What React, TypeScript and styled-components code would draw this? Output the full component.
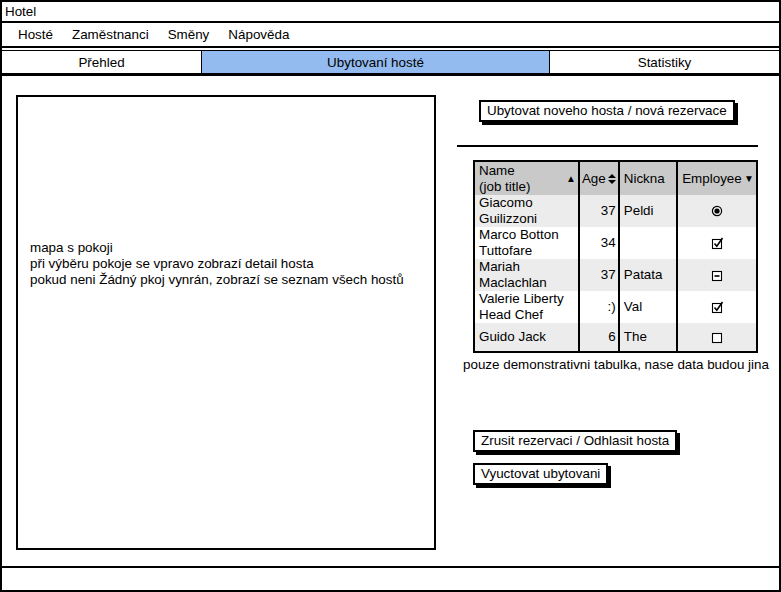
import styled, { createGlobalStyle } from "styled-components";

const GlobalStyle = createGlobalStyle`
  html, body {
    margin: 0;
    padding: 0;
    background: #fff;
  }
  body {
    font-family: "Liberation Sans", Arial, sans-serif;
    font-size: 13.4px;
    color: #000;
  }
`;

type Guest = {
  name: string[];
  age: string;
  nick: string;
  employee: "radio" | "checked" | "mixed" | "empty";
};

const guests: Guest[] = [
  { name: ["Giacomo", "Guilizzoni"], age: "37", nick: "Peldi", employee: "radio" },
  { name: ["Marco Botton", "Tuttofare"], age: "34", nick: "", employee: "checked" },
  { name: ["Mariah", "Maclachlan"], age: "37", nick: "Patata", employee: "mixed" },
  { name: ["Valerie Liberty", "Head Chef"], age: ":)", nick: "Val", employee: "checked" },
  { name: ["Guido Jack"], age: "6", nick: "The", employee: "empty" },
];

const menuItems = ["Hosté", "Zaměstnanci", "Směny", "Nápověda"];

const tabs = [
  { label: "Přehled", width: 200, active: false },
  { label: "Ubytovaní hosté", width: 348, active: true },
  { label: "Statistiky", width: 0, active: false },
];

const EmployeeIcon = ({ kind }: { kind: Guest["employee"] }) => {
  if (kind === "radio") {
    return (
      <svg width="12" height="12" viewBox="0 0 12 12">
        <circle cx="6" cy="6" r="4.6" fill="none" stroke="#000" strokeWidth="1.2" />
        <circle cx="6" cy="6" r="2.6" fill="#000" />
      </svg>
    );
  }
  return (
    <svg width="13" height="13" viewBox="0 0 13 13">
      <rect x="1.5" y="2.5" width="9" height="9" fill="#fff" stroke="#000" strokeWidth="1.1" />
      {kind === "checked" && (
        <path d="M3.5 6.5 L5.8 9.2 L11.5 1" fill="none" stroke="#000" strokeWidth="1.6" />
      )}
      {kind === "mixed" && <rect x="3.5" y="6.2" width="5" height="1.6" fill="#000" />}
    </svg>
  );
};

const App = () => {
  return (
    <>
      <GlobalStyle />
      <Window>
        <TitleBar>Hotel</TitleBar>
        <MenuBar>
          {menuItems.map((m) => (
            <MenuItem key={m}>{m}</MenuItem>
          ))}
        </MenuBar>
        <TabBar>
          {tabs.map((t) => (
            <Tab key={t.label} $width={t.width} $active={t.active}>
              {t.label}
            </Tab>
          ))}
        </TabBar>
        <Content>
          <MapBox>
            <p>mapa s pokoji</p>
            <p>při výběru pokoje se vpravo zobrazí detail hosta</p>
            <p>pokud neni Žádný pkoj vynrán, zobrazí se seznam všech hostů</p>
          </MapBox>
          <RightColumn>
            <Button $top={24} $left={22}>
              Ubytovat noveho hosta / nová rezervace
            </Button>
            <Divider />
            <Grid>
              <thead>
                <tr>
                  <th className="name">
                    <HeadCell>
                      <span>
                        Name
                        <br />
                        (job title)
                      </span>
                      <SortArrow>▲</SortArrow>
                    </HeadCell>
                  </th>
                  <th className="age">
                    <HeadCell>
                      <span>Age</span>
                      <svg width="8" height="10" viewBox="0 0 8 10">
                        <path d="M0 4 L4 0 L8 4 Z M0 6 L4 10 L8 6 Z" fill="#000" />
                      </svg>
                    </HeadCell>
                  </th>
                  <th className="nick">Nickna</th>
                  <th className="emp">
                    <HeadCell>
                      <span>Employee</span>
                      <SortArrow>▼</SortArrow>
                    </HeadCell>
                  </th>
                </tr>
              </thead>
              <tbody>
                {guests.map((g, i) => (
                  <Row key={i} $shaded={i % 2 === 0} $short={g.name.length === 1}>
                    <td>
                      {g.name.map((line, j) => (
                        <div key={j}>{line}</div>
                      ))}
                    </td>
                    <td className="age">{g.age}</td>
                    <td>{g.nick}</td>
                    <td className="emp">
                      <EmployeeIcon kind={g.employee} />
                    </td>
                  </Row>
                ))}
              </tbody>
            </Grid>
            <Caption>pouze demonstrativni tabulka, nase data budou jina</Caption>
            <Button $top={57} $left={16}>
              Zrusit rezervaci / Odhlasit hosta
            </Button>
            <Button $top={11} $left={16}>
              Vyuctovat ubytovani
            </Button>
          </RightColumn>
        </Content>
        <StatusBar />
      </Window>
    </>
  );
};

export default App;

const Window = styled.div`
  width: 781px;
  height: 592px;
  box-sizing: border-box;
  border: 2px solid #000;
  display: flex;
  flex-direction: column;
  background: #fff;
`;

const TitleBar = styled.div`
  height: 19px;
  line-height: 19px;
  padding-left: 3px;
  border-bottom: 2px solid #000;
`;

const MenuBar = styled.div`
  height: 23px;
  display: flex;
  align-items: center;
  gap: 19px;
  padding-left: 16px;
  border-bottom: 2px solid #000;
`;

const MenuItem = styled.span`
  cursor: default;
`;

const TabBar = styled.div`
  margin-top: 2px;
  height: 22px;
  display: flex;
  border-top: 1px solid #000;
  border-bottom: 3px solid #000;
`;

const Tab = styled.div<{ $width: number; $active: boolean }>`
  box-sizing: border-box;
  ${(p) => (p.$width ? `width: ${p.$width}px;` : "flex: 1;")}
  display: flex;
  align-items: center;
  justify-content: center;
  background: ${(p) => (p.$active ? "#94bbef" : "#fff")};
  border-right: 1px solid #000;

  &:last-child {
    border-right: none;
  }
`;

const Content = styled.div`
  height: 492px;
  box-sizing: border-box;
  display: flex;
  gap: 21px;
  padding: 19px 14px 0;
  border-bottom: 2px solid #000;
`;

const MapBox = styled.div`
  width: 420px;
  height: 455px;
  box-sizing: border-box;
  border: 2px solid #000;
  display: flex;
  flex-direction: column;
  padding: 143px 0 0 12px;

  p {
    margin: 0;
    line-height: 16px;
  }
`;

const RightColumn = styled.div`
  width: 301px;
  margin-top: -19px;
  display: flex;
  flex-direction: column;
  align-items: flex-start;
`;

const Button = styled.div<{ $top: number; $left: number }>`
  margin-top: ${(p) => p.$top}px;
  margin-left: ${(p) => p.$left}px;
  box-sizing: border-box;
  height: 22px;
  line-height: 18px;
  padding: 0 6px;
  border: 2px solid #000;
  box-shadow: 3px 3px 0 #000;
  background: #fff;
  white-space: nowrap;
`;

const Divider = styled.div`
  margin-top: 23px;
  width: 301px;
  height: 0;
  border-top: 2px solid #000;
`;

const Grid = styled.table`
  margin-top: 13px;
  margin-left: 16px;
  border-collapse: collapse;
  border: 2px solid #000;
  font-size: 13.4px;

  th,
  td {
    padding: 0 4px;
    border-left: 2px solid #000;
    text-align: left;
    vertical-align: middle;
    line-height: 16px;
  }

  th {
    background: #c9c9c9;
    font-weight: normal;
    height: 33px;
  }

  th.name {
    width: 99px;
    padding-right: 2px;
  }
  th.age {
    width: 34px;
    padding: 0 2px;
  }
  th.nick {
    width: 49px;
  }
  th.emp {
    width: 72px;
    padding-right: 2px;
  }

  td.age {
    text-align: right;
    padding-right: 2px;
  }

  td.emp {
    text-align: center;
    line-height: 0;
  }
`;

const HeadCell = styled.div`
  display: flex;
  align-items: center;
  justify-content: space-between;
`;

const SortArrow = styled.span`
  font-size: 10px;
`;

const Row = styled.tr<{ $shaded: boolean; $short: boolean }>`
  background: ${(p) => (p.$shaded ? "#ececec" : "#fff")};

  td {
    height: ${(p) => (p.$short ? 28 : 32)}px;
  }
`;

const Caption = styled.div`
  margin-top: 4px;
  margin-left: 6px;
  line-height: 16px;
  white-space: nowrap;
`;

const StatusBar = styled.div`
  flex: 1;
`;
